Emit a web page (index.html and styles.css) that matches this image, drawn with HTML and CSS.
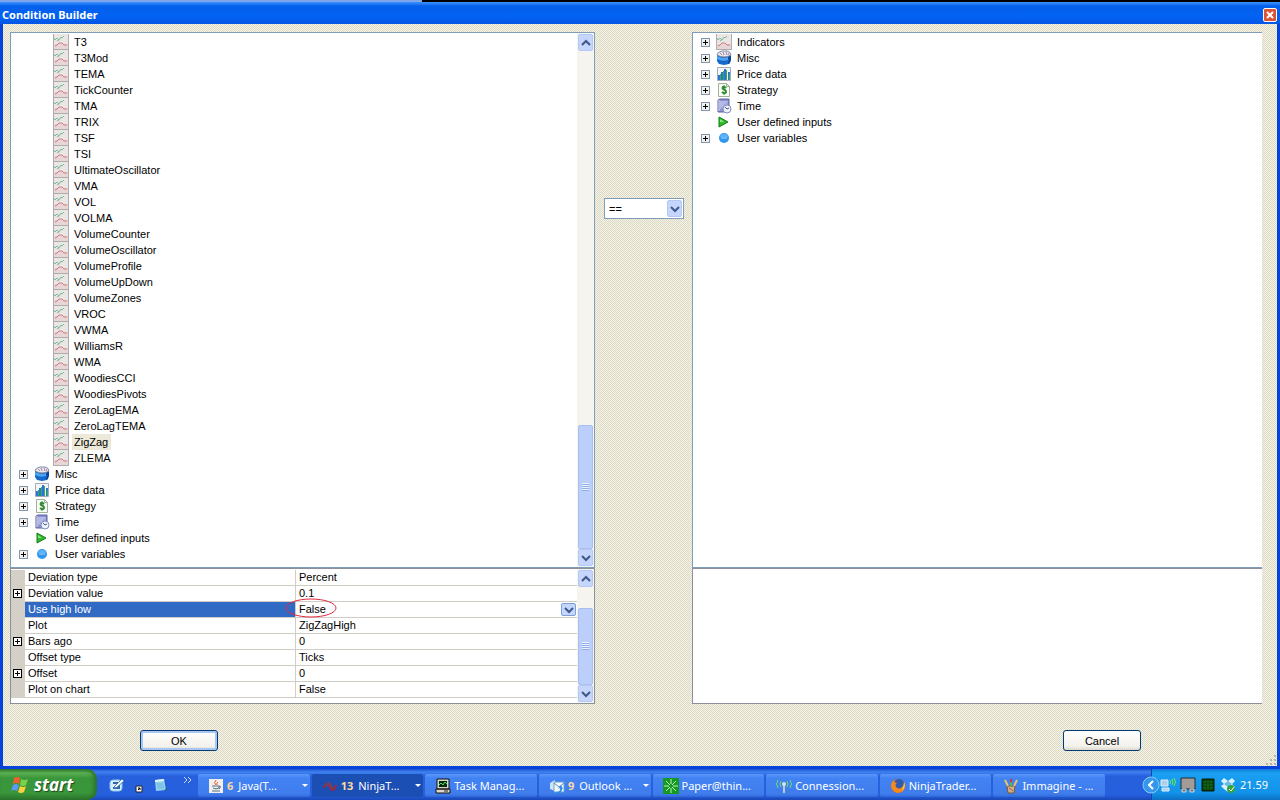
FILE: index.html
```
<!DOCTYPE html>
<html lang="en">
<head>
    <meta charset="UTF-8">
    <meta name="viewport" content="width=device-width, initial-scale=1.0">
    <title>Condition Builder</title>
    <link rel="stylesheet" href="styles.css">
</head>
<body>
    <!-- Shared icons -->
    <svg class="sprite" aria-hidden="true">
        <symbol id="chart" viewBox="0 0 16 16">
            <rect width="16" height="16" fill="#e9e6e5"/>
            <path d="M1 10h14v5H1z" fill="#e6d6d6"/>
            <path d="M0.500 0v16M15.500 0v16M0 15.500h16" stroke="#b0acab" fill="none"/>
            <path d="M1 4l1 2 2-2 2 2 2-3 1 1 2-2M4 7l2-1" stroke="#7dbb98" fill="none"/>
            <path d="M2 12l2-1 2-2h3l2 2h3" stroke="#d4787c" fill="none"/>
        </symbol>
        <symbol id="misc" viewBox="0 0 16 16">
            <path d="M1 5v6l2 3 5 1 5-1 2-4V4z" fill="#1668cc"/>
            <path d="M1 5l1 4 6 1 5-1-1 5 2-1 1-4V4z" fill="#0c459c"/>
            <path d="M1 6q6 3 11 1v3q-6 2-11-1z" fill="#4aa4f4"/>
            <path d="M1 5q0-3 5-4h5q4 1 4 4-3 2-7 2T1 5z" fill="#e8e6ee" stroke="#7d8ba8"/>
            <path d="M4 3l2 2M7 2l1 3M10 2l1 3M13 3l-1 2" stroke="#a88a98" fill="none"/>
        </symbol>
        <symbol id="price" viewBox="0 0 16 16">
            <path d="M1.500 1.500h13v13h-13z" fill="#f4f6fb" stroke="#a4acba"/>
            <path d="M2 9h2v5H2zM5 6h2v8H5zM8 3h2v11H8zM12 6h2v8h-2z" fill="#2e74d4"/>
            <path d="M4 8h1v6H4zM7 5h1v9H7zM10 4h1v10h-1zM13 8h1v6h-1z" fill="#32b050"/>
        </symbol>
        <symbol id="strategy" viewBox="0 0 16 16">
            <path d="M2.500 1.500h8l3 3v10h-11z" fill="#fafcf8" stroke="#9fb09a"/>
            <path d="M10.500 1.500v3h3" fill="none" stroke="#9fb09a"/>
            <path d="M10 6q-1-1-3-1-1 1 0 2l2 1q2 2 0 3-2 0-3-1" fill="none" stroke="#2f8a2d" stroke-width="2"/>
            <path d="M8 3v2M8 11v2" stroke="#2f8a2d"/>
        </symbol>
        <symbol id="time" viewBox="0 0 16 16">
            <path d="M2 2l2-1h9v11l-1 2H2z" fill="#8c92cc" stroke="#5a609c"/>
            <path d="M4 3h8v8H4z" fill="#b4bae8"/>
            <path d="M4 11l8-8v8z" fill="#a0a7dc"/>
            <path d="M3 2v11" stroke="#dcdff8"/>
            <circle cx="11" cy="11" r="4" fill="#eef2fc" stroke="#8490b8"/>
            <path d="M9 9l2 2 2-1" stroke="#4a5688" fill="none"/>
        </symbol>
        <symbol id="inputs" viewBox="0 0 16 16">
            <path d="M3 3l9 5-9 5z" fill="#2eb82e" stroke="#118011"/>
            <path d="M4 5l4 3-4 0z" fill="#8fe67c"/>
        </symbol>
        <symbol id="variables" viewBox="0 0 16 16">
            <circle cx="8" cy="8" r="5" fill="#2f95ee"/>
            <path d="M4 7q0-3 4-3t4 3z" fill="#5eb2f8"/>
            <path d="M5 8h6" stroke="#a4d6ff"/>
        </symbol>
        <symbol id="up" viewBox="0 0 10 10"><path d="M1 7l4-4 4 4" fill="none" stroke="#3f5788" stroke-width="2"/></symbol>
        <symbol id="down" viewBox="0 0 10 10"><path d="M1 3l4 4 4-4" fill="none" stroke="#3f5788" stroke-width="2"/></symbol>
    </svg>

    <div class="desktop-strip"></div>
    <div class="dialog">
        <div class="titlebar">
            <h1>Condition Builder</h1>
            <button class="close" aria-label="Close">
                <svg viewBox="0 0 12 12"><path d="M3 3l6 6M9 3l-6 6" stroke="#fff" stroke-width="2"/></svg>
            </button>
        </div>
        <div class="content">
            <div class="panels">
                <div class="column">
                    <div class="panel tree-panel">
                        <ul class="tree">
                            <li class="child"><svg class="icon"><use href="#chart"/></svg><span>T3</span></li>
                            <li class="child"><svg class="icon"><use href="#chart"/></svg><span>T3Mod</span></li>
                            <li class="child"><svg class="icon"><use href="#chart"/></svg><span>TEMA</span></li>
                            <li class="child"><svg class="icon"><use href="#chart"/></svg><span>TickCounter</span></li>
                            <li class="child"><svg class="icon"><use href="#chart"/></svg><span>TMA</span></li>
                            <li class="child"><svg class="icon"><use href="#chart"/></svg><span>TRIX</span></li>
                            <li class="child"><svg class="icon"><use href="#chart"/></svg><span>TSF</span></li>
                            <li class="child"><svg class="icon"><use href="#chart"/></svg><span>TSI</span></li>
                            <li class="child"><svg class="icon"><use href="#chart"/></svg><span>UltimateOscillator</span></li>
                            <li class="child"><svg class="icon"><use href="#chart"/></svg><span>VMA</span></li>
                            <li class="child"><svg class="icon"><use href="#chart"/></svg><span>VOL</span></li>
                            <li class="child"><svg class="icon"><use href="#chart"/></svg><span>VOLMA</span></li>
                            <li class="child"><svg class="icon"><use href="#chart"/></svg><span>VolumeCounter</span></li>
                            <li class="child"><svg class="icon"><use href="#chart"/></svg><span>VolumeOscillator</span></li>
                            <li class="child"><svg class="icon"><use href="#chart"/></svg><span>VolumeProfile</span></li>
                            <li class="child"><svg class="icon"><use href="#chart"/></svg><span>VolumeUpDown</span></li>
                            <li class="child"><svg class="icon"><use href="#chart"/></svg><span>VolumeZones</span></li>
                            <li class="child"><svg class="icon"><use href="#chart"/></svg><span>VROC</span></li>
                            <li class="child"><svg class="icon"><use href="#chart"/></svg><span>VWMA</span></li>
                            <li class="child"><svg class="icon"><use href="#chart"/></svg><span>WilliamsR</span></li>
                            <li class="child"><svg class="icon"><use href="#chart"/></svg><span>WMA</span></li>
                            <li class="child"><svg class="icon"><use href="#chart"/></svg><span>WoodiesCCI</span></li>
                            <li class="child"><svg class="icon"><use href="#chart"/></svg><span>WoodiesPivots</span></li>
                            <li class="child"><svg class="icon"><use href="#chart"/></svg><span>ZeroLagEMA</span></li>
                            <li class="child"><svg class="icon"><use href="#chart"/></svg><span>ZeroLagTEMA</span></li>
                            <li class="child"><svg class="icon"><use href="#chart"/></svg><span class="selected">ZigZag</span></li>
                            <li class="child"><svg class="icon"><use href="#chart"/></svg><span>ZLEMA</span></li>
                            <li><button class="expand" aria-label="Expand Misc"></button><svg class="icon"><use href="#misc"/></svg><span>Misc</span></li>
                            <li><button class="expand" aria-label="Expand Price data"></button><svg class="icon"><use href="#price"/></svg><span>Price data</span></li>
                            <li><button class="expand" aria-label="Expand Strategy"></button><svg class="icon"><use href="#strategy"/></svg><span>Strategy</span></li>
                            <li><button class="expand" aria-label="Expand Time"></button><svg class="icon"><use href="#time"/></svg><span>Time</span></li>
                            <li class="leaf"><svg class="icon"><use href="#inputs"/></svg><span>User defined inputs</span></li>
                            <li><button class="expand" aria-label="Expand User variables"></button><svg class="icon"><use href="#variables"/></svg><span>User variables</span></li>
                        </ul>
                        <div class="scrollbar">
                            <button class="arrow" aria-label="Scroll up"><svg><use href="#up"/></svg></button>
                            <div class="track tree-track"><div class="thumb"></div></div>
                            <button class="arrow" aria-label="Scroll down"><svg><use href="#down"/></svg></button>
                        </div>
                    </div>
                    <div class="panel props-panel">
                        <table class="props">
                            <tr><td class="gutter"></td><th>Deviation type</th><td>Percent</td></tr>
                            <tr><td class="gutter"><button class="expand dark" aria-label="Expand Deviation value"></button></td><th>Deviation value</th><td>0.1</td></tr>
                            <tr class="active">
                                <td class="gutter"></td>
                                <th>Use high low</th>
                                <td>
                                    <div class="value">False <button class="arrow drop" aria-label="Choose value"><svg><use href="#down"/></svg></button></div>
                                    <svg class="mark" viewBox="0 0 54 20"><ellipse cx="27" cy="10" rx="25" ry="9" fill="none" stroke="#e0283c"/></svg>
                                </td>
                            </tr>
                            <tr><td class="gutter"></td><th>Plot</th><td>ZigZagHigh</td></tr>
                            <tr><td class="gutter"><button class="expand dark" aria-label="Expand Bars ago"></button></td><th>Bars ago</th><td>0</td></tr>
                            <tr><td class="gutter"></td><th>Offset type</th><td>Ticks</td></tr>
                            <tr><td class="gutter"><button class="expand dark" aria-label="Expand Offset"></button></td><th>Offset</th><td>0</td></tr>
                            <tr><td class="gutter"></td><th>Plot on chart</th><td>False</td></tr>
                        </table>
                        <div class="scrollbar">
                            <button class="arrow" aria-label="Scroll up"><svg><use href="#up"/></svg></button>
                            <div class="track props-track"><div class="thumb"></div></div>
                            <button class="arrow" aria-label="Scroll down"><svg><use href="#down"/></svg></button>
                        </div>
                    </div>
                </div>

                <div class="operator">
                    <select aria-label="Operator">
                        <option>==</option>
                    </select>
                    <span class="arrow select-arrow"><svg><use href="#down"/></svg></span>
                </div>

                <div class="column right">
                    <div class="panel tree-panel">
                        <ul class="tree">
                            <li><button class="expand" aria-label="Expand Indicators"></button><svg class="icon"><use href="#chart"/></svg><span>Indicators</span></li>
                            <li><button class="expand" aria-label="Expand Misc"></button><svg class="icon"><use href="#misc"/></svg><span>Misc</span></li>
                            <li><button class="expand" aria-label="Expand Price data"></button><svg class="icon"><use href="#price"/></svg><span>Price data</span></li>
                            <li><button class="expand" aria-label="Expand Strategy"></button><svg class="icon"><use href="#strategy"/></svg><span>Strategy</span></li>
                            <li><button class="expand" aria-label="Expand Time"></button><svg class="icon"><use href="#time"/></svg><span>Time</span></li>
                            <li class="leaf"><svg class="icon"><use href="#inputs"/></svg><span>User defined inputs</span></li>
                            <li><button class="expand" aria-label="Expand User variables"></button><svg class="icon"><use href="#variables"/></svg><span>User variables</span></li>
                        </ul>
                    </div>
                    <div class="panel props-panel"></div>
                </div>
            </div>
            <div class="actions">
                <button class="btn default">OK</button>
                <button class="btn">Cancel</button>
            </div>
            <svg class="grip" viewBox="0 0 12 12"><path d="M9 1h2v2H9zM5 5h2v2H5zM9 5h2v2H9zM1 9h2v2H1zM5 9h2v2H5zM9 9h2v2H9z" fill="#b8b4a2"/></svg>
        </div>
    </div>

    <div class="taskbar">
        <button class="start">
            <svg viewBox="0 0 20 20">
                <path d="M4 3q3-2 6 0L9 9Q6 7 3 9z" fill="#f0602c"/>
                <path d="M11 4q3 2 7 0l-2 6q-3 2-6 0z" fill="#7cd04a"/>
                <path d="M3 10q3-2 6 0l-2 6q-3-2-6 0z" fill="#5a9cf4"/>
                <path d="M10 11q3 2 6 0l-2 6q-3 2-6 0z" fill="#fbd03c"/>
            </svg>
            start
        </button>
        <div class="quick">
            <button aria-label="Show desktop">
                <svg class="icon" viewBox="0 0 16 16">
                    <rect x="1" y="3" width="12" height="11" rx="3" fill="#d8ecfa" stroke="#8cc4ea"/>
                    <path d="M4 6h5M4 11h6V8" stroke="#2a68b0" fill="none" stroke-width="2"/>
                    <path d="M5 10l8-8 2 2-8 7z" fill="#fff" stroke="#4780b5"/>
                </svg>
            </button>
            <button aria-label="Shortcut">
                <svg class="icon" viewBox="0 0 16 16">
                    <path d="M5 9h6v6H5z" fill="#fff" stroke="#222"/><path d="M7 13l2-2M7 11h2v2" stroke="#000" fill="none"/>
                </svg>
            </button>
            <button aria-label="Notepad">
                <svg class="icon" viewBox="0 0 16 16">
                    <path d="M2 3l9-1 2 11-10 1z" fill="#8fd0ee"/><path d="M2 3l9-1v2L2 5z" fill="#e2f4fa"/>
                    <path d="M4 7h6M4 9h7M5 11h6" stroke="#6eb5dc"/><path d="M11 14l3-4v3z" fill="#3b5c74"/>
                </svg>
            </button>
            <button class="more" aria-label="More">
                <svg viewBox="0 0 9 6"><path d="M1 0l3 3-3 3M5 0l3 3-3 3" fill="none" stroke="#c4dcff"/></svg>
            </button>
        </div>
        <div class="tasks">
            <button class="task">
                <svg class="icon" viewBox="0 0 16 16">
                    <rect x="1" y="1" width="14" height="14" fill="#f2efea"/>
                    <path d="M8 2q-3 3 0 5M10 4q-2 1-1 3" stroke="#e05a28" fill="none"/>
                    <path d="M4 8h7v2q-3 2-6 0M11 8q3 0 0 3M4 13h8" stroke="#53708f" fill="none"/>
                </svg>
                <b>6</b><span>Java(T...</span><i></i>
            </button>
            <button class="task pressed">
                <svg class="icon" viewBox="0 0 16 16">
                    <path d="M2 10q1-5 4-4l4 6q3 0 4-5" stroke="#a02a38" fill="none" stroke-width="2"/>
                    <path d="M3 8l4-3 4 5" stroke="#6c4468" fill="none" stroke-width="2"/>
                </svg>
                <b>13</b><span>NinjaT...</span><i></i>
            </button>
            <button class="task">
                <svg class="icon" viewBox="0 0 16 16">
                    <path d="M2 1h12v10H2zM1 11h14v4H1z" fill="#ddd9c8" stroke="#111"/>
                    <path d="M4 3h8v6H4z" fill="#062a10"/>
                    <path d="M4 7l2-2 2 2 2-3 2 2" stroke="#49e060" fill="none"/><path d="M9 13h4" stroke="#222"/>
                </svg>
                <span>Task Manag...</span>
            </button>
            <button class="task">
                <svg class="icon" viewBox="0 0 16 16">
                    <path d="M1 5l5-3v11l-5-2z" fill="#cfe4f4"/><path d="M5 4h10v10H5z" fill="#f4f8fb" stroke="#6aa3ce"/>
                    <path d="M5 5l5 4 5-4" stroke="#578cba" fill="none"/>
                    <path d="M7 14q5 0 4-4l-2 1 3-4 2 4h-1q0 5-6 4z" fill="#2c8ee4"/>
                </svg>
                <b>9</b><span>Outlook ...</span><i></i>
            </button>
            <button class="task">
                <svg class="icon" viewBox="0 0 16 16">
                    <rect width="16" height="16" fill="#149a24"/>
                    <path d="M8 1v5M8 10v5M1 8h5M10 8h5M3 3l4 4M9 9l4 4M13 3L9 7M7 9l-4 4" stroke="#c6f4b2"/>
                </svg>
                <span>Paper@thin...</span>
            </button>
            <button class="task">
                <svg class="icon" viewBox="0 0 16 16">
                    <path d="M2 2q-3 4 0 8M5 3q-2 3 0 6M14 2q3 4 0 8M11 3q2 3 0 6" stroke="#6ae06c" fill="none"/>
                    <path d="M8 6v9" stroke="#b7cbdb" stroke-width="2"/><circle cx="8" cy="6" r="2" fill="#d8e4ec"/>
                </svg>
                <span>Connession...</span>
            </button>
            <button class="task">
                <svg class="icon" viewBox="0 0 16 16">
                    <circle cx="8" cy="8" r="7" fill="#e8651c"/><circle cx="9" cy="6" r="5" fill="#2f5cb0"/>
                    <path d="M1 7q1-4 3-5 0 3 3 3-3 2 0 5 4 2 7-4 1-2 0-3 3 5-1 10-4 3-8 1-4-3-4-7z" fill="#f48a1e"/>
                    <path d="M14 4q2 5-2 9 2-5 2-9z" fill="#fbd44a"/>
                </svg>
                <span>NinjaTrader...</span>
            </button>
            <button class="task">
                <svg class="icon" viewBox="0 0 16 16">
                    <path d="M4 8h8l-1 7H5z" fill="#c9b28a" stroke="#7a5530"/>
                    <path d="M5 8L2 2M11 8l3-6" stroke="#e6c463" stroke-width="2"/><path d="M8 8V2" stroke="#5ab060" stroke-width="2"/>
                    <path d="M7 1h2v3H7z" fill="#c83a2c"/><path d="M6 10l4 3" stroke="#d44e30"/>
                </svg>
                <span>Immagine - ...</span>
            </button>
        </div>
        <div class="tray">
            <button class="hide-icons" aria-label="Show hidden icons">
                <svg viewBox="0 0 18 18"><circle cx="9" cy="9" r="8" fill="#3596ec" stroke="#83c8fa"/><path d="M11 5L7 9l4 4" fill="none" stroke="#fff" stroke-width="2"/></svg>
            </button>
            <svg class="icon" viewBox="0 0 16 16">
                <path d="M1 3h7v6H1zM2 11h7v3H2z" fill="#a8d2ee" stroke="#e2f0f8"/>
                <path d="M10 3q1 2 0 4M12 2q2 3 0 6M14 1q3 4 0 8" stroke="#6af04c" fill="none"/>
            </svg>
            <svg class="icon" viewBox="0 0 16 16">
                <path d="M1 1h14v11H1z" fill="#a29c98" stroke="#252b36"/><path d="M2 12h4v3H2zM10 12h4v3h-4z" fill="#77777b" stroke="#d0d4d8"/>
            </svg>
            <svg class="icon" viewBox="0 0 16 16">
                <path d="M2 2h12v12H2z" fill="#063806" stroke="#0a1c0a"/><path d="M5 3v10M8 3v10M11 3v10M3 5h10M3 8h10M3 11h10" stroke="#176a1b"/>
            </svg>
            <svg class="icon" viewBox="0 0 16 16">
                <path d="M4 1l4 3 4-3 3 3-3 3 3 3-4 3-3 2-4-3-3-3 3-2-3-3z" fill="#d9f0fc"/>
                <path d="M4 7l4-3 4 3-4 3z" fill="#66b9ea"/><circle cx="11" cy="12" r="4" fill="#35a33e"/><path d="M9 12l2 2 3-4" stroke="#fff" fill="none"/>
            </svg>
            <time>21.59</time>
        </div>
    </div>
</body>
</html>
```
FILE: styles.css
```
* {
    box-sizing: border-box;
}
body {
    margin: 0;
    min-height: 100vh;
    display: flex;
    flex-direction: column;
    font-family: "Liberation Sans", Arial, sans-serif;
    font-size: 11px;
    color: #000;
    background: #0a4fe0;
}
button {
    font: inherit;
    color: inherit;
    padding: 0;
    border: none;
    background: none;
}
ul {
    list-style: none;
    margin: 0;
    padding: 0;
}
.sprite {
    position: absolute;
    width: 0;
    height: 0;
}
.icon {
    width: 16px;
    height: 16px;
    flex: none;
}
.desktop-strip {
    height: 2px;
    background: linear-gradient(90deg, #7ea4ea 33%, #000 33%);
}

/* Dialog */
.dialog {
    flex: 1;
    display: flex;
    flex-direction: column;
    border: solid #0842dc;
    border-width: 0 3px 3px;
}
.titlebar {
    display: flex;
    justify-content: space-between;
    align-items: center;
    height: 22px;
    margin: 0 -3px;
    padding: 3px 3px 0 2px;
    background: linear-gradient(#3f94ff, #0560ea 4px, #0262f4 15px, #0456e4);
}
.titlebar h1 {
    margin: 0;
    font: bold 11px "Noto Sans", sans-serif;
    color: #fff;
}
.close {
    display: flex;
    width: 14px;
    height: 14px;
    border: 1px solid #fff;
    border-radius: 2px;
    background: #dc5335;
}
.content {
    flex: 1;
    position: relative;
    display: flex;
    flex-direction: column;
    padding: 8px 15px 15px 7px;
    background: repeating-conic-gradient(#dad7c2 0 25%, #f6f4e9 0 50%) 0 0 / 2px 2px;
}
.panels {
    flex: 1;
    display: grid;
    grid-template-columns: 585fr 97px 570fr;
}
.column {
    display: flex;
    flex-direction: column;
}
.panel {
    display: flex;
    background: #fff;
    border: 1px solid #7f9db9;
}
.right .panel {
    border-right: none;
}
.tree-panel {
    flex: 1;
}
.props-panel {
    height: 136px;
    border-color: #8c9199;
}

/* Tree */
.tree {
    flex: 1;
    padding: 1px 0 0 8px;
}
.tree li {
    display: flex;
    align-items: center;
    gap: 5px;
    height: 16px;
}
.tree li.child {
    padding-left: 34px;
}
.tree li.leaf {
    padding-left: 15px;
}
.tree li span {
    line-height: 16px;
}
.tree .selected {
    margin-left: -2px;
    padding: 0 3px 0 2px;
    background: #ece9d8;
}
.expand {
    flex: none;
    width: 9px;
    height: 9px;
    margin-right: 1px;
    border: 1px solid #8496ae;
    background:
        linear-gradient(#000, #000) center / 5px 1px no-repeat,
        linear-gradient(#000, #000) center / 1px 5px no-repeat,
        #f2f0ea;
}
.expand.dark {
    display: block;
    margin: 0 2px;
    border-color: #000;
    background-color: #fff;
}

/* Scroll bars */
.scrollbar {
    display: flex;
    flex-direction: column;
    width: 17px;
    padding: 1px;
    background: #f5f4ef;
}
.arrow {
    flex: none;
    display: flex;
    align-items: center;
    justify-content: center;
    width: 15px;
    height: 17px;
    border: 1px solid #b4c8f4;
    border-radius: 2px;
    background: #c5d5fc;
}
.arrow svg {
    width: 10px;
    height: 10px;
}
.track {
    flex: 1;
    display: flex;
    flex-direction: column;
    justify-content: flex-end;
}
.thumb {
    border: 1px solid #a9bff2;
    border-radius: 2px;
    background:
        repeating-linear-gradient(#edf3ff 0 1px, #8eaef0 1px 2px) center / 7px 8px no-repeat,
        #bccffb;
}
.tree-track .thumb {
    height: 25%;
}
.props-track .thumb {
    height: 79%;
}

/* Property grid */
.props {
    flex: 1;
    align-self: flex-start;
    table-layout: fixed;
    border-collapse: separate;
    border-spacing: 0;
    margin-top: 1px;
}
.props td,
.props th {
    height: 16px;
    padding: 0 0 0 3px;
    border-bottom: 1px solid #cfcdc6;
    font-weight: normal;
    line-height: 15px;
    text-align: left;
}
.props th {
    width: 271px;
    border-right: 1px solid #cfcdc6;
}
.props .gutter {
    width: 14px;
    padding: 0;
    border-color: #d4d0c8;
    background: #d4d0c8;
}
.props .active th {
    color: #fff;
    background: #316ac5;
}
.props .active td {
    position: relative;
}
.value {
    display: flex;
    justify-content: space-between;
    align-items: center;
}
.drop {
    height: 13px;
    margin-right: 1px;
    border-color: #7ba0dc;
}
.mark {
    position: absolute;
    left: -12px;
    top: -4px;
    width: 54px;
    height: 20px;
}

/* Operator */
.operator {
    position: relative;
    align-self: start;
    margin: 166px 8px 0 9px;
}
.operator select {
    appearance: none;
    display: block;
    width: 100%;
    height: 21px;
    padding: 0 4px;
    border: 1px solid #7f9db9;
    border-radius: 0;
    background: #fff;
    font: inherit;
    color: #000;
}
.select-arrow {
    position: absolute;
    top: 2px;
    right: 2px;
    pointer-events: none;
}

/* Buttons */
.actions {
    display: flex;
    justify-content: space-between;
    padding: 26px 121px 0 130px;
}
.btn {
    width: 78px;
    height: 21px;
    border: 1px solid #003c74;
    border-radius: 3px;
    background: linear-gradient(#fff, #f2f1ec 80%, #dcd8cc);
}
.btn.default {
    box-shadow: inset 0 0 0 2px #a9c5f2;
}
.grip {
    position: absolute;
    right: 0;
    bottom: 0;
    width: 12px;
    height: 12px;
}

/* Taskbar */
.taskbar {
    display: flex;
    height: 31px;
    font-family: "Noto Sans", sans-serif;
    color: #fff;
    background: linear-gradient(#1c4fc8, #3f83f2 3px, #2860dc 7px, #2560de 26px, #1a48b8);
}
.start {
    display: flex;
    align-items: center;
    gap: 4px;
    width: 97px;
    padding: 0 0 0 10px;
    border-radius: 0 10px 10px 0;
    font: italic bold 17px "Open Sans", sans-serif;
    text-shadow: 1px 1px 1px #1c4a1c;
    background: linear-gradient(#2f7a2f, #5cb254 4px, #3a963a 9px, #3a963a 24px, #2a742a);
    box-shadow: inset -3px 0 4px #2a722c;
}
.start svg {
    width: 20px;
    height: 20px;
}
.quick {
    display: flex;
    align-items: center;
    gap: 6px;
    width: 101px;
    padding-left: 12px;
}
.quick button {
    display: flex;
}
.quick .more {
    align-self: flex-start;
    margin: 8px 0 0 8px;
}
.more svg {
    width: 9px;
    height: 6px;
}
.tasks {
    flex: 1;
    display: grid;
    grid-template-columns: repeat(8, 1fr);
    gap: 2px;
    padding: 5px 0 3px;
}
.task {
    display: flex;
    align-items: center;
    gap: 3px;
    min-width: 0;
    padding: 0 2px 0 10px;
    border-radius: 2px;
    white-space: nowrap;
    background: linear-gradient(#5c98fa, #4283f4 4px, #3f7cec 20px, #2f68d8);
}
.task.pressed {
    background: #1c4fb4;
}
.task b {
    color: #fcd9a0;
}
.task b + span {
    margin-left: 2px;
}
.task i {
    margin-left: auto;
    border: 3px solid transparent;
    border-top-color: #fff;
    border-bottom: none;
}
.tray {
    display: flex;
    align-items: center;
    gap: 4px;
    width: 129px;
    margin-left: 46px;
    background: linear-gradient(#0f7ad8, #1ba0f2 4px, #1292e8 24px, #0c70c4);
    border-left: 1px solid #0c4aa8;
}
.hide-icons {
    display: flex;
    margin: 0 -4px 0 -10px;
}
.hide-icons svg {
    width: 18px;
    height: 18px;
}
```
